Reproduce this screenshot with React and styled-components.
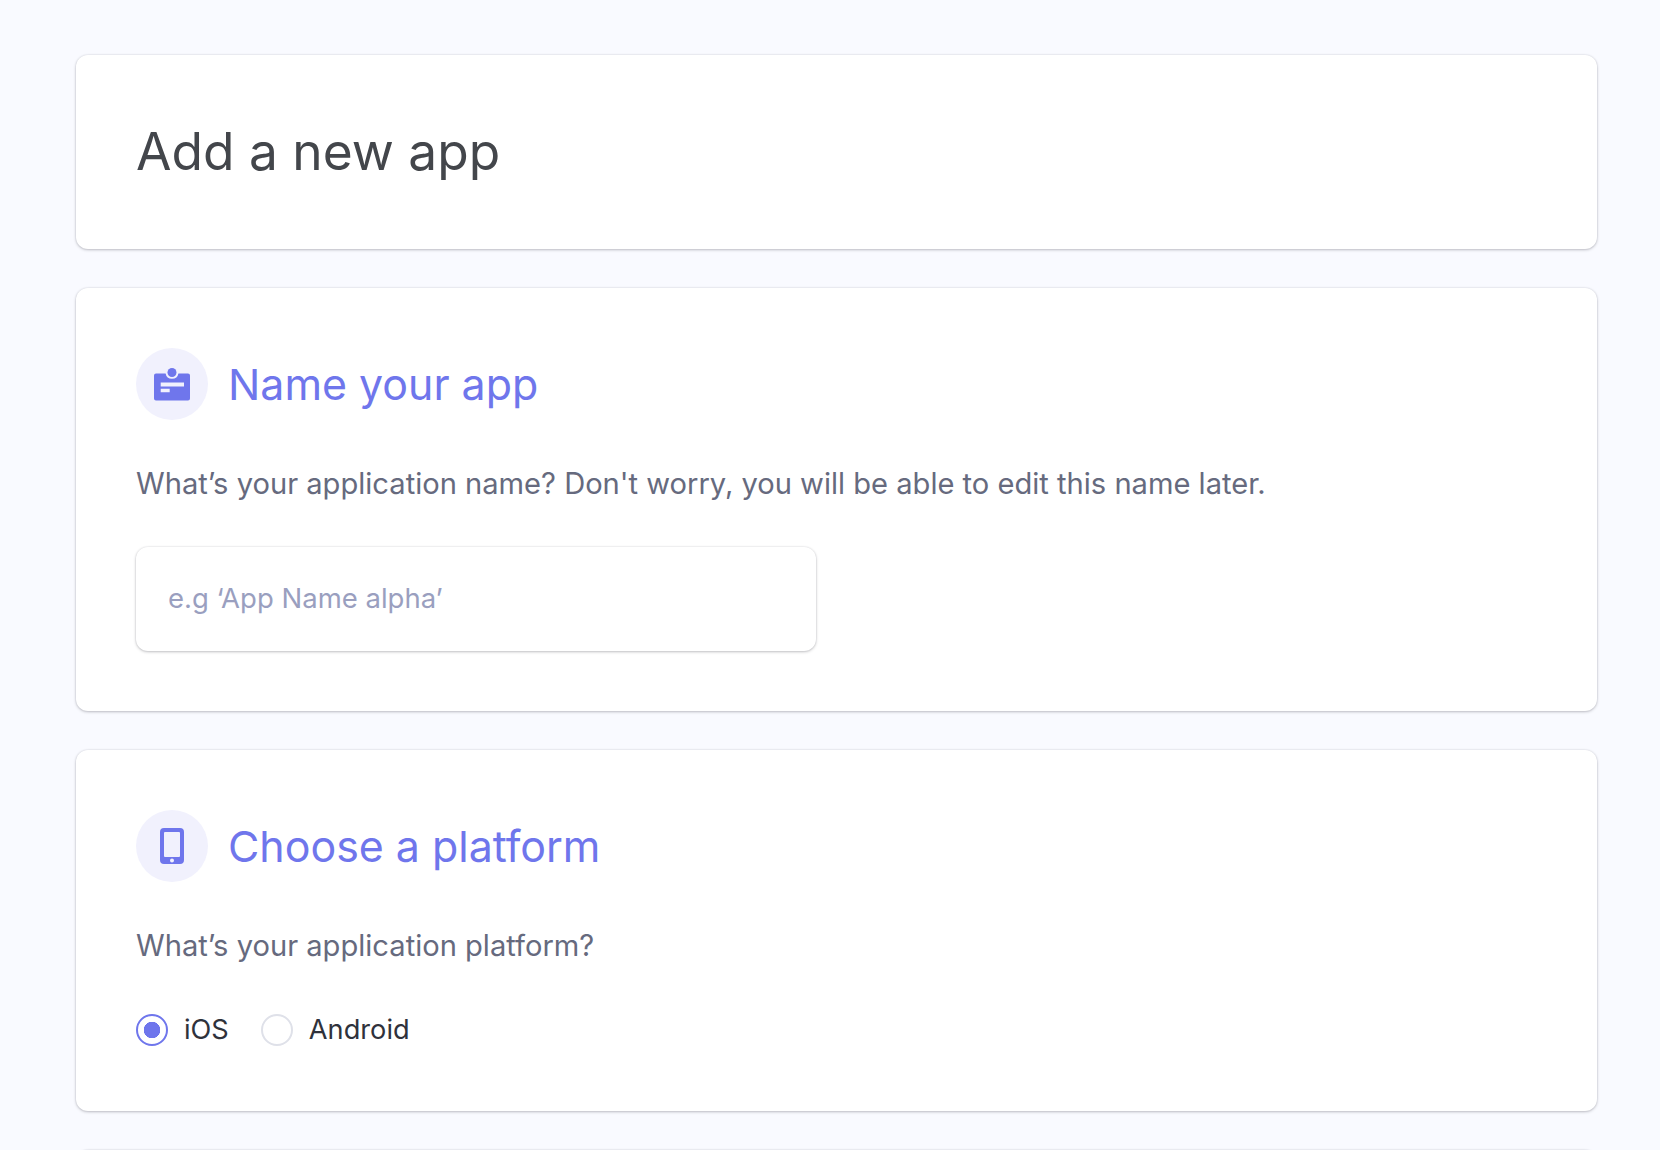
import React from 'react'
import styled, { createGlobalStyle } from 'styled-components'

const GlobalStyle = createGlobalStyle`
    html, body {
        margin: 0;
        height: 100%;
        overflow: hidden;
        background: #f9faff;
        font-family: 'Inter', 'Liberation Sans', sans-serif;
    }
`
const Page = styled.main`
    display: flex;
    flex-direction: column;
    gap: 39px;
    padding: 55px 63px 0 76px;
    background: #f9faff;
`
const Card = styled.section`
    display: flex;
    flex-direction: column;
    align-items: flex-start;
    box-sizing: border-box;
    padding: 60px;
    background: #fff;
    border-radius: 12px;
    box-shadow: 0 0 1px 1px rgba(60, 60, 80, 0.04), 0 1px 3px rgba(30, 30, 40, 0.26);
`
const TitleCard = styled(Card)`
    height: 194px;
    padding: 0 60px 2px;
    justify-content: center;
`
const PageTitle = styled.h1`
    margin: 0;
    font-size: 51.45px;
    font-weight: 400;
    line-height: 60px;
    color: #43464b;
`
const SectionHeader = styled.div`
    display: flex;
    align-items: center;
    gap: 20px;
`
const IconCircle = styled.div`
    display: flex;
    align-items: center;
    justify-content: center;
    width: 72px;
    height: 72px;
    border-radius: 50%;
    background: #f1f1fd;
`
const SectionTitle = styled.h2`
    margin: 0;
    font-size: 42.9px;
    font-weight: 400;
    line-height: 50px;
    color: #6f76ec;
`
const Description = styled.p`
    margin: 46px 0 0;
    font-size: 29.12px;
    font-weight: 400;
    line-height: 36px;
    color: #666a7e;
`
const NameInput = styled.input`
    box-sizing: border-box;
    display: block;
    width: 680px;
    height: 104px;
    margin-top: 45px;
    padding: 0 32px 2px;
    background: #fff;
    border: 0;
    border-radius: 12px;
    box-shadow: 0 0 1px 1px rgba(60, 60, 80, 0.04), 0 1px 3px rgba(30, 30, 40, 0.26);
    font-family: inherit;
    font-size: 27.5px;
    outline: 0;
    &::placeholder {
        color: #9a9fbf;
        opacity: 1;
    }
`
const RadioRow = styled.div`
    display: flex;
    align-items: center;
    gap: 32px;
    margin-top: 50px;
    margin-bottom: 5px;
`
const RadioLabel = styled.label`
    display: flex;
    align-items: center;
    gap: 16px;
    font-size: 27.2px;
    line-height: 32px;
    color: #2f323b;
`
const Radio = styled.input`
    appearance: none;
    box-sizing: border-box;
    width: 32px;
    height: 32px;
    margin: 0;
    border: 2px solid ${props => props.checked ? '#6f76ec' : '#dfe1e9'};
    border-radius: 50%;
    background: ${props => props.checked ? 'radial-gradient(circle, #6f76ec 0 8px, #fff 8.5px)' : '#fff'};
`
const NextCard = styled(Card)`
    height: 300px;
`

const BadgeIcon = () => (
    <svg width="36" height="33" viewBox="0 0 36 33">
        <path
            fill="#6f76ec"
            fillRule="evenodd"
            d="M2 5.500h9.600a6.500 6.500 0 0 0 12.800 0H34a2 2 0 0 1 2 2v23a2 2 0 0 1-2 2H2a2 2 0 0 1-2-2v-23a2 2 0 0 1 2-2zM6.700 14.500v4h23.300v-4zM6.700 20.800v3.400h9v-3.400z"
        />
        <circle cx="18" cy="4.500" r="4.500" fill="#6f76ec" />
    </svg>
)

const PhoneIcon = () => (
    <svg width="24" height="36" viewBox="0 0 24 36">
        <path
            fill="#6f76ec"
            fillRule="evenodd"
            d="M4 0h16a4 4 0 0 1 4 4v28a4 4 0 0 1-4 4H4a4 4 0 0 1-4-4V4a4 4 0 0 1 4-4zM5 4a1 1 0 0 0-1 1v23a1 1 0 0 0 1 1h14a1 1 0 0 0 1-1V5a1 1 0 0 0-1-1zM12 30.500a2 2 0 1 0 0 4a2 2 0 0 0 0-4z"
        />
    </svg>
)

const App = () => (
    <Page>
        <GlobalStyle />
        <TitleCard>
            <PageTitle>Add a new app</PageTitle>
        </TitleCard>
        <Card>
            <SectionHeader>
                <IconCircle><BadgeIcon /></IconCircle>
                <SectionTitle>Name your app</SectionTitle>
            </SectionHeader>
            <Description>What’s your application name? Don't worry, you will be able to edit this name later.</Description>
            <NameInput type="text" placeholder="e.g ‘App Name alpha’" />
        </Card>
        <Card>
            <SectionHeader>
                <IconCircle><PhoneIcon /></IconCircle>
                <SectionTitle>Choose a platform</SectionTitle>
            </SectionHeader>
            <Description>What’s your application platform?</Description>
            <RadioRow>
                <RadioLabel><Radio type="radio" name="platform" checked readOnly />iOS</RadioLabel>
                <RadioLabel><Radio type="radio" name="platform" checked={false} readOnly />Android</RadioLabel>
            </RadioRow>
        </Card>
        <NextCard />
    </Page>
)

export default App
